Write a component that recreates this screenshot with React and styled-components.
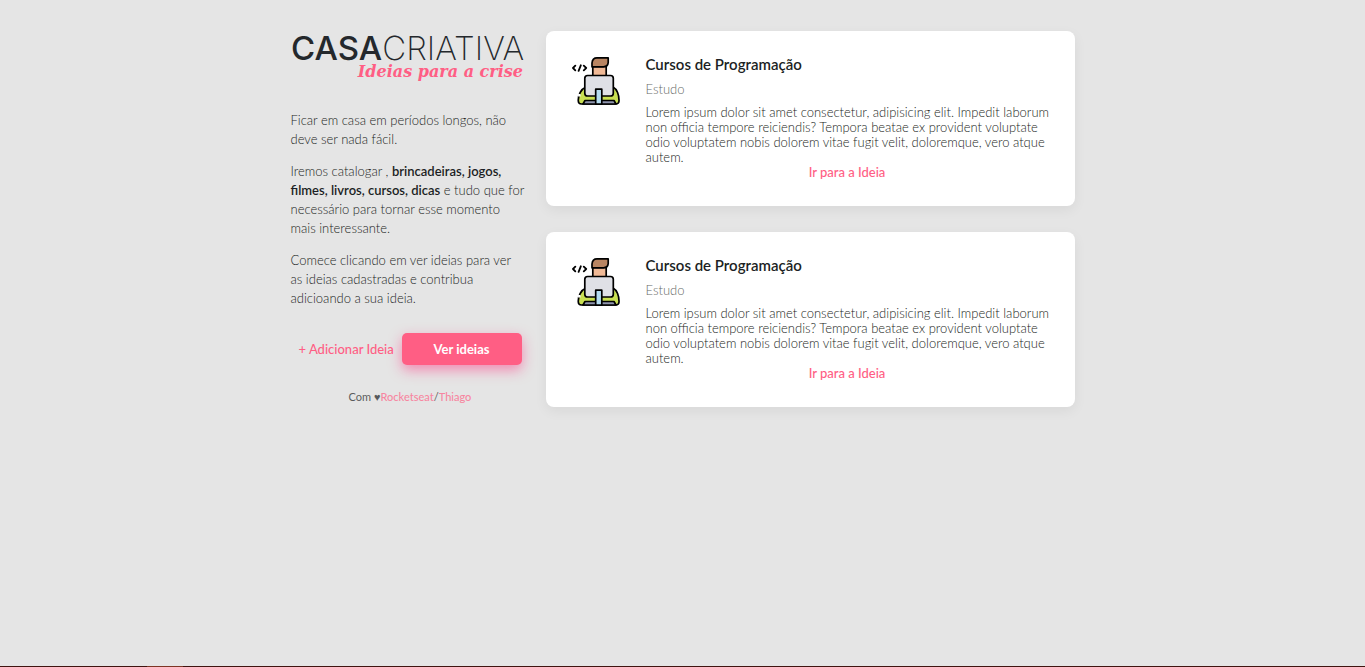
import React from "react";
import styled, { createGlobalStyle } from "styled-components";

const GlobalStyle = createGlobalStyle`
  * { box-sizing: border-box; margin: 0; padding: 0; }
  body {
    background: #e5e5e5;
    color: #1c1f24;
    font-family: Lato, "Open Sans", sans-serif;
    font-size: 13px;
    font-weight: 300;
  }
  a { text-decoration: none; color: #ff5e84; font-weight: 500; }
`;

const Page = styled.div`
  min-height: 100vh;
  display: flex;
  flex-direction: column;
`;

const Container = styled.div`
  flex: 1;
  width: 100%;
  max-width: 784px;
  margin: 0 auto;
  padding: 31px 0;
  display: grid;
  grid-template-columns: 235px minmax(0, 1fr);
  align-items: start;
  gap: 20px;
`;

const Logo = styled.svg`
  display: block;
  width: 232px;
  height: 56px;
  overflow: visible;
`;

const Intro = styled.section`
  display: flex;
  flex-direction: column;
  gap: 13px;
  margin-top: 24px;
  line-height: 19px;
`;

const Strong = styled.strong`
  font-weight: 600;
`;

const Actions = styled.div`
  display: flex;
  align-items: center;
  justify-content: space-between;
  margin-top: 25px;
  padding: 0 4px 0 8px;
`;

const AddLink = styled.a`
  white-space: nowrap;
`;

const Button = styled.button`
  width: 120px;
  height: 32px;
  border: 0;
  border-radius: 5px;
  background: #ff5e84;
  box-shadow: 0 5px 13px rgba(255, 46, 126, 0.5);
  color: #fff;
  font: inherit;
  font-weight: 700;
`;

const Credits = styled.footer`
  margin-top: 24px;
  padding: 0 4px 0 8px;
  text-align: center;
  font-size: 11px;
  line-height: 16px;
  font-weight: 400;
  opacity: 0.7;
`;

const Ideas = styled.main`
  display: flex;
  flex-direction: column;
  gap: 26px;
`;

const Card = styled.article`
  display: flex;
  align-items: flex-start;
  gap: 26px;
  min-height: 175px;
  padding: 26px 20px 26px 26px;
  border-radius: 8px;
  background: #fff;
  box-shadow: 0 4px 13px rgba(0, 0, 0, 0.06);
`;

const CardIcon = styled.svg`
  flex: none;
  width: 48px;
  height: 48px;
`;

const CardBody = styled.div`
  flex: 1;
  line-height: 15px;
`;

const CardTitle = styled.h3`
  font-size: 15px;
  line-height: 15px;
  font-weight: 600;
`;

const Category = styled.p`
  margin: 10px 0 8px;
  opacity: 0.7;
`;

const CardLink = styled.a`
  display: block;
  padding-right: 6px;
  text-align: center;
`;

const Strip = styled.div`
  height: 1px;
  padding-left: 147px;
  background: #3f1410;
`;

const StripMark = styled.div`
  width: 36px;
  height: 1px;
  background: #7c3524;
`;

const Programmer = () => (
  <CardIcon viewBox="0 0 48 48" aria-hidden="true" strokeLinejoin="round" strokeLinecap="round">
    <g fill="none" stroke="#000" strokeWidth="1.8">
      <path d="M3.3 8.7 1 11l2.3 2.3M11.8 8.7 14.2 11l-2.4 2.3M8.8 8.3 6.6 13.8" />
    </g>
    <g stroke="#000" strokeWidth="1.7">
      <path fill="#c9e052" d="M14 30c-5 2-8 8-7.700 14q.2 3 3 3h34.500q3 0 3.200-3c.2-6-2-12-6-14z" />
      <path fill="#8f94ae" d="M13 43.500h29l2 3.500H11z" />
      <path fill="#f0b996" d="M20.800 9.500h13.400V19H20.800z" />
      <path fill="#b98562" d="M20 9.800V6Q20.500.9 25 .9h11.200v4.800q-.4 4.100-4.700 4.100z" />
      <rect fill="#dfe0e6" x="12.800" y="18.500" width="28.500" height="20.500" rx="2.800" />
      <path fill="#b4dcf1" d="M23.700 32.200h6.100V47h-6.100z" />
    </g>
    <path d="M7.300 37v2.500" stroke="#fff" strokeWidth="2.500" strokeLinecap="butt" />
  </CardIcon>
);

const IdeaCard = ({ title, category, children }) => (
  <Card>
    <Programmer />
    <CardBody>
      <CardTitle>{title}</CardTitle>
      <Category>{category}</Category>
      <p>{children}</p>
      <CardLink href="#ideia">Ir para a Ideia</CardLink>
    </CardBody>
  </Card>
);

const lorem =
  "Lorem ipsum dolor sit amet consectetur, adipisicing elit. Impedit laborum non officia tempore reiciendis? Tempora beatae ex provident voluptate odio voluptatem nobis dolorem vitae fugit velit, doloremque, vero atque autem.";

export default function App() {
  return (
    <Page>
      <GlobalStyle />
      <Container>
        <aside>
          <Logo role="img" aria-label="Casa Criativa, ideias para a crise">
            <text x="0" y="29" fontFamily="Inter, sans-serif" fontSize="33" fill="#24282c" fontWeight="200">
              <tspan fontWeight="500">CASA</tspan>CRIATIVA
            </text>
            <text
              x="232"
              y="46"
              textAnchor="end"
              fontFamily="DejaVu Serif, serif"
              fontSize="16"
              fontWeight="700"
              fontStyle="italic"
              fill="#ff5e84"
            >
              Ideias para a crise
            </text>
          </Logo>
          <Intro>
            <p>Ficar em casa em períodos longos, não deve ser nada fácil.</p>
            <p>
              Iremos catalogar , <Strong>brincadeiras, jogos, filmes, livros, cursos, dicas</Strong> e tudo que for
              necessário para tornar esse momento mais interessante.
            </p>
            <p>Comece clicando em ver ideias para ver as ideias cadastradas e contribua adicioando a sua ideia.</p>
          </Intro>
          <Actions>
            <AddLink href="#adicionar">+ Adicionar Ideia</AddLink>
            <Button type="button">Ver ideias</Button>
          </Actions>
          <Credits>
            Com ♥<a href="#rocketseat">Rocketseat</a>/<a href="#thiago">Thiago</a>
          </Credits>
        </aside>
        <Ideas>
          <IdeaCard title="Cursos de Programação" category="Estudo">{lorem}</IdeaCard>
          <IdeaCard title="Cursos de Programação" category="Estudo">{lorem}</IdeaCard>
        </Ideas>
      </Container>
      <Strip>
        <StripMark />
      </Strip>
    </Page>
  );
}
